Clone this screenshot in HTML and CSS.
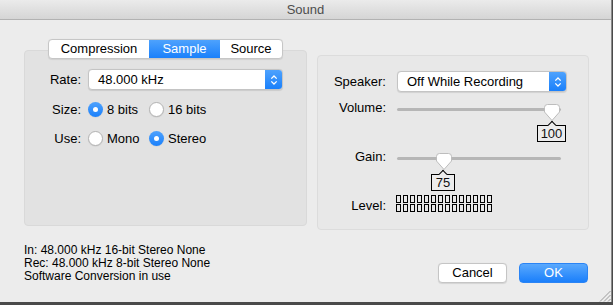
FILE: index.html
```html
<!DOCTYPE html>
<html lang="en">
<head>
    <meta charset="UTF-8">
    <title>Sound</title>
    <link rel="stylesheet" href="styles.css">
</head>
<body>
    <div class="window">
        <div class="titlebar">Sound</div>
        <div class="content">
            <div class="left-col">
                <div class="tabs">
                    <div class="tab tab-compression">Compression</div>
                    <div class="tab tab-sample selected">Sample</div>
                    <div class="tab tab-source">Source</div>
                </div>
                <div class="group group-left">
                    <div class="form-row row-rate">
                        <div class="label">Rate:</div>
                        <div class="popup popup-rate">
                            <span class="popup-text">48.000 kHz</span>
                            <span class="popup-arrows">
                                <svg width="8" height="12" viewBox="0 0 8 12"><path d="M1.3 4.6 L4 2 L6.7 4.6 M1.3 7.4 L4 10 L6.7 7.4" fill="none" stroke="#fff" stroke-width="1.3"/></svg>
                            </span>
                        </div>
                    </div>
                    <div class="form-row row-radio row-size">
                        <div class="label">Size:</div>
                        <div class="radio-set">
                            <span class="radio on"></span><span class="radio-text">8 bits</span>
                            <span class="radio"></span><span class="radio-text">16 bits</span>
                        </div>
                    </div>
                    <div class="form-row row-radio row-use">
                        <div class="label">Use:</div>
                        <div class="radio-set">
                            <span class="radio"></span><span class="radio-text">Mono</span>
                            <span class="radio on"></span><span class="radio-text">Stereo</span>
                        </div>
                    </div>
                </div>
                <div class="info">
                    <div>In: 48.000 kHz 16-bit Stereo None</div>
                    <div>Rec: 48.000 kHz 8-bit Stereo None</div>
                    <div>Software Conversion in use</div>
                </div>
            </div>

            <div class="right-col">
                <div class="group group-right">
                    <div class="form-row row-speaker">
                        <div class="label">Speaker:</div>
                        <div class="popup popup-speaker">
                            <span class="popup-text">Off While Recording</span>
                            <span class="popup-arrows">
                                <svg width="8" height="12" viewBox="0 0 8 12"><path d="M1.3 4.6 L4 2 L6.7 4.6 M1.3 7.4 L4 10 L6.7 7.4" fill="none" stroke="#fff" stroke-width="1.3"/></svg>
                            </span>
                        </div>
                    </div>
                    <div class="form-row row-slider row-volume">
                        <div class="label">Volume:</div>
                        <div class="slider">
                            <div class="track"></div>
                            <svg class="thumb" style="left: 146px" width="18" height="19" viewBox="0 0 18 19"><path d="M1.5 4.5 a3 3 0 0 1 3 -3 h9 a3 3 0 0 1 3 3 v4.5 l-7.5 8.5 l-7.5 -8.5 z" fill="#fff" stroke="#bdbdbd"/></svg>
                            <div class="value-box" style="left: 140px; width: 29px">100</div>
                        </div>
                    </div>
                    <div class="form-row row-slider row-gain">
                        <div class="label">Gain:</div>
                        <div class="slider">
                            <div class="track"></div>
                            <svg class="thumb" style="left: 38px" width="18" height="19" viewBox="0 0 18 19"><path d="M1.5 4.5 a3 3 0 0 1 3 -3 h9 a3 3 0 0 1 3 3 v4.5 l-7.5 8.5 l-7.5 -8.5 z" fill="#fff" stroke="#bdbdbd"/></svg>
                            <div class="value-box" style="left: 34px; width: 24px">75</div>
                        </div>
                    </div>
                    <div class="form-row row-level">
                        <div class="label">Level:</div>
                        <div class="meter" id="meter"></div>
                    </div>
                </div>
                <div class="buttons">
                    <div class="button cancel">Cancel</div>
                    <div class="button ok">OK</div>
                </div>
            </div>
        </div>
        <div class="grip">
            <svg width="13" height="13" viewBox="0 0 13 13"><path d="M12.5 2 L2 12.5 M12.5 6 L6 12.5 M12.5 10 L10 12.5" stroke="#9a9a9a" stroke-width="1"/></svg>
        </div>
    </div>

    <script>
        // two rows of level cells
        const meter = document.getElementById('meter');
        for (let i = 0; i < 28; i++) {
            const cell = document.createElement('span');
            cell.className = 'cell';
            meter.appendChild(cell);
        }
    </script>
</body>
</html>
```

FILE: styles.css
```css
* {
    box-sizing: border-box;
}

body {
    margin: 0;
    width: 613px;
    height: 305px;
    background-color: #4a4a4a;
    font-family: "Liberation Sans", Arial, sans-serif;
    font-size: 13px;
    color: #000;
    overflow: hidden;
}

.window {
    position: relative;
    width: 612px;
    height: 302px;
    background-color: #ececec;
    border-right: 1px solid #8a8a8a;
}

.titlebar {
    height: 20px;
    line-height: 19px;
    text-align: center;
    color: #4d4d4d;
    background: linear-gradient(#ebebeb, #d5d5d5);
    border-bottom: 1px solid #b2b2b2;
}

.content {
    display: flex;
    padding: 19px 0 0 24px;
}

/* left column */

.left-col {
    width: 283px;
}

.tabs {
    position: relative;
    z-index: 1;
    display: flex;
    width: 235px;
    height: 20px;
    margin-left: 24px;
    background-color: #fff;
    border: 1px solid #c6c6c6;
    border-radius: 4px;
    box-shadow: 0 0.5px 1px rgba(0, 0, 0, 0.08);
    overflow: hidden;
}

.tab {
    line-height: 18px;
    text-align: center;
}

.tab-compression {
    width: 100px;
}

.tab-sample {
    width: 71px;
}

.tab-source {
    flex: 1;
}

.tab.selected {
    color: #fff;
    background: linear-gradient(#4ea2fd, #1a80fb);
}

.group {
    border: 1px solid #d9d9d9;
    border-radius: 4px;
}

.group-left {
    height: 176px;
    margin-top: -9px;
    padding-top: 18px;
    background-color: #e2e2e2;
}

.form-row {
    display: flex;
    align-items: center;
}

.group-left .label {
    width: 56px;
    text-align: right;
    margin-right: 7px;
}

.popup {
    display: flex;
    align-items: center;
    height: 21px;
    background-color: #fff;
    border: 1px solid #c4c4c4;
    border-radius: 4px;
    box-shadow: 0 0.5px 1px rgba(0, 0, 0, 0.1);
    overflow: hidden;
}

.popup-rate {
    width: 195px;
}

.popup-speaker {
    width: 170px;
}

.popup-text {
    flex: 1;
    padding-left: 9px;
}

.popup-arrows {
    display: flex;
    align-items: center;
    justify-content: center;
    width: 17px;
    height: 100%;
    background: linear-gradient(#4ea2fd, #1a80fb);
}

.row-radio {
    height: 16px;
}

.row-size {
    margin-top: 11px;
}

.row-use {
    margin-top: 13px;
}

.radio-set {
    display: flex;
    align-items: center;
}

.radio {
    width: 15px;
    height: 15px;
    border-radius: 50%;
    background-color: #fff;
    border: 1px solid #b3b3b3;
    box-shadow: 0 0.5px 1px rgba(0, 0, 0, 0.1);
    position: relative;
}

.radio.on {
    border: none;
    background: linear-gradient(#4ea2fd, #1a80fb);
}

.radio.on::after {
    content: "";
    position: absolute;
    left: 5px;
    top: 5px;
    width: 5px;
    height: 5px;
    border-radius: 50%;
    background-color: #fff;
}

.radio-text {
    margin-left: 4px;
    width: 42px;
}

.info {
    margin-top: 18px;
    font-size: 12px;
    line-height: 13px;
}

/* right column */

.right-col {
    width: 272px;
    margin-left: 10px;
    margin-top: 16px;
}

.group-right {
    height: 175px;
    padding-top: 15px;
    background-color: #e8e8e8;
    border-color: #dcdcdc;
}

.group-right .label {
    width: 68px;
    text-align: right;
    margin-right: 11px;
}

.row-slider {
    align-items: flex-start;
}

.row-slider .label {
    margin-top: -3px;
    line-height: 16px;
}

.row-volume {
    margin-top: 11px;
}

.row-gain {
    margin-top: 30px;
}

.slider {
    position: relative;
    width: 164px;
    height: 19px;
}

.track {
    margin-top: 5px;
    height: 3px;
    border-radius: 2px;
    background-color: #b6b6b6;
}

.thumb {
    position: absolute;
    top: 0;
}

.value-box {
    position: absolute;
    top: 22px;
    height: 17px;
    line-height: 16px;
    text-align: center;
    border: 1px solid #000;
    color: #111;
    background-color: #ececec;
}

.value-box::before {
    content: "";
    position: absolute;
    left: 50%;
    top: -4px;
    width: 5px;
    height: 5px;
    margin-left: -3px;
    background-color: #ececec;
    border-left: 1px solid #000;
    border-top: 1px solid #000;
    transform: rotate(45deg);
}

.row-level {
    margin-top: 24px;
    align-items: flex-end;
}

.row-level .label {
    line-height: 16px;
    margin-bottom: -2px;
}

.meter {
    display: grid;
    grid-template-columns: repeat(14, 5px);
    grid-auto-rows: 8px;
    column-gap: 2px;
    row-gap: 1px;
    margin-left: -1px;
}

.cell {
    border: 1px solid #000;
}

.buttons {
    display: flex;
    justify-content: flex-end;
    gap: 12px;
    margin-top: 33px;
    padding-right: 1px;
}

.button {
    width: 69px;
    height: 20px;
    line-height: 18px;
    text-align: center;
    border-radius: 4px;
}

.cancel {
    background-color: #fff;
    border: 1px solid #c5c5c5;
    box-shadow: 0 0.5px 1px rgba(0, 0, 0, 0.1);
}

.ok {
    color: #fff;
    background: linear-gradient(#5aa9fd, #1a7ffb);
    border: 1px solid #2a84f5;
}

.grip {
    position: absolute;
    right: 0;
    bottom: 0;
    width: 13px;
    height: 13px;
}
```
